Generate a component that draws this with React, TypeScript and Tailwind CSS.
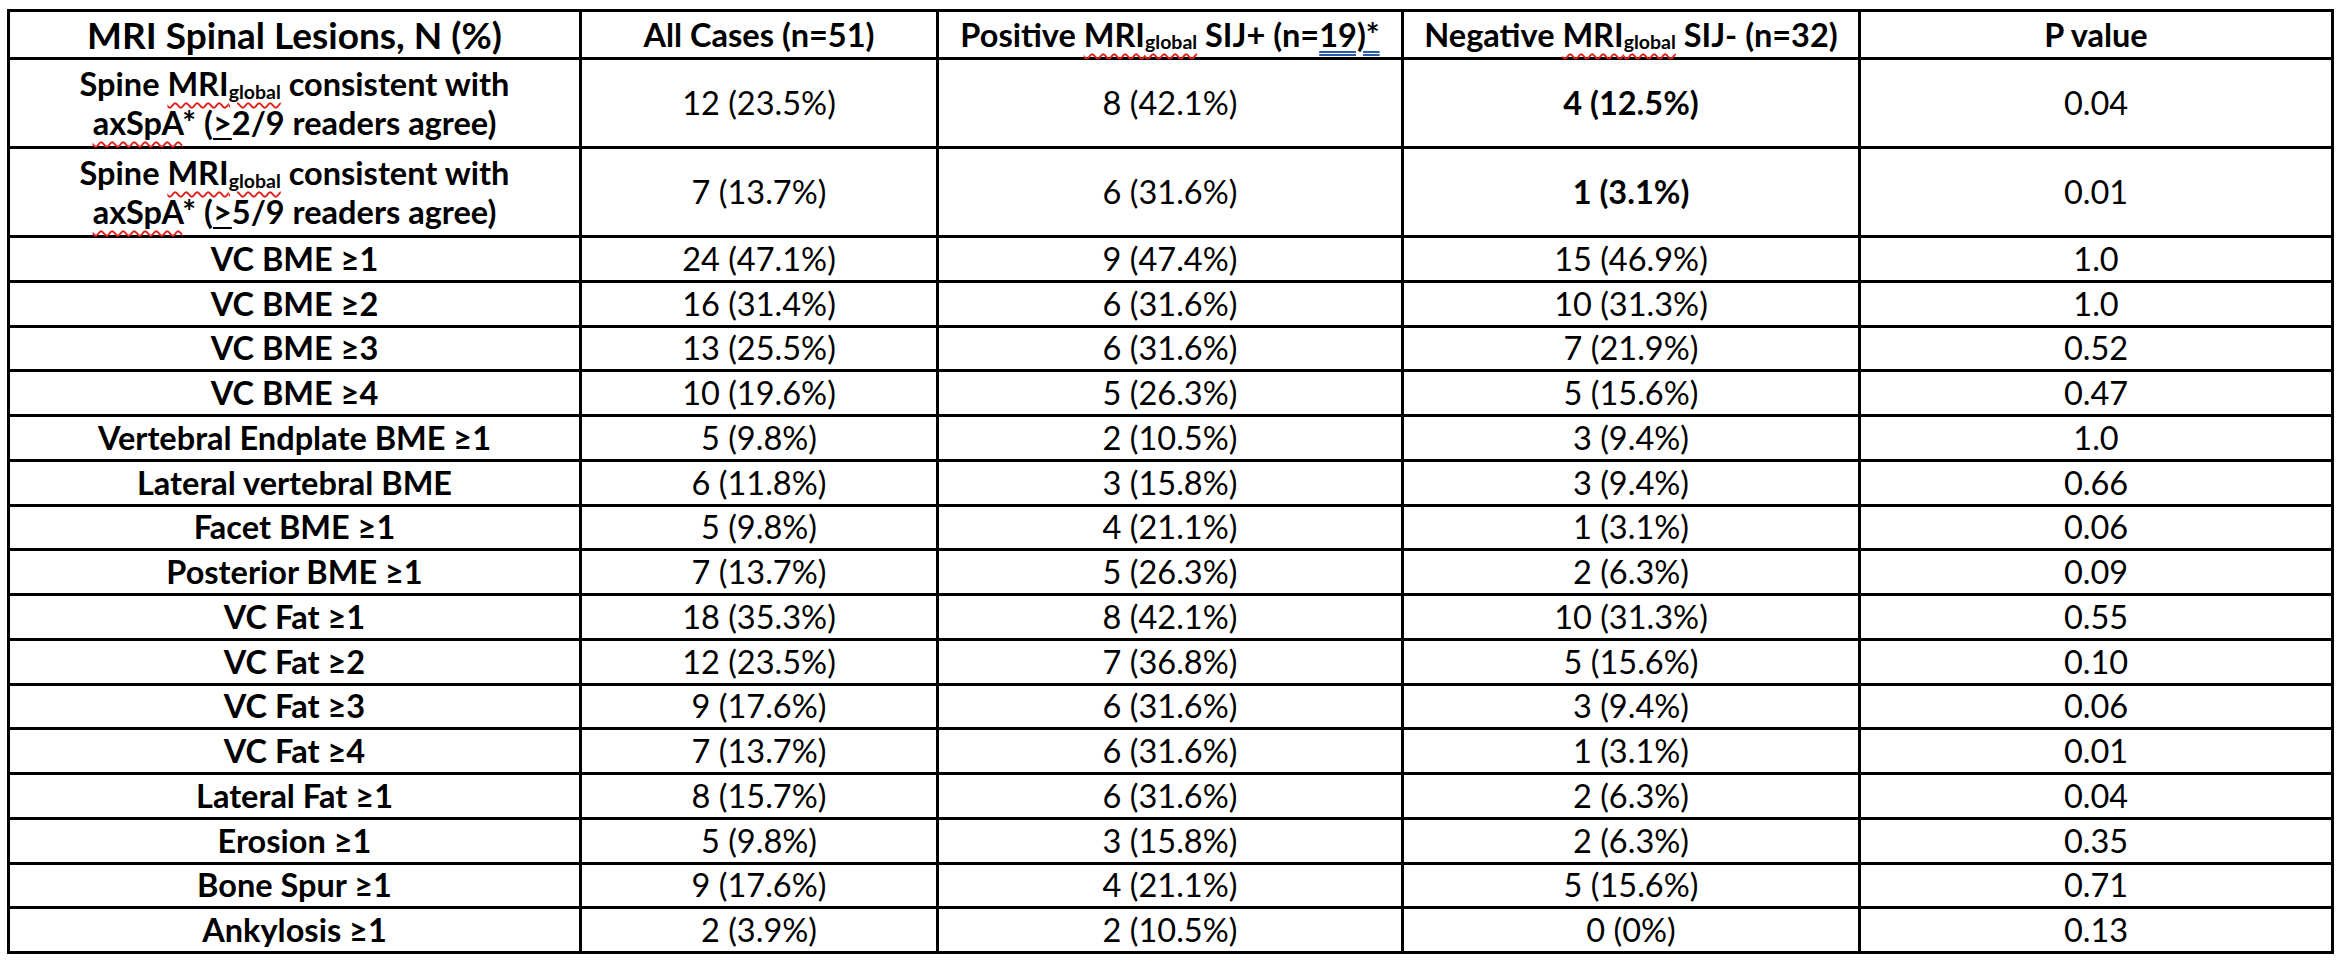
import React from "react";

type Row = [string, string, string, string, string];

const rows: Row[] = [
  ["VC BME ≥1", "24 (47.1%)", "9 (47.4%)", "15 (46.9%)", "1.0"],
  ["VC BME ≥2", "16 (31.4%)", "6 (31.6%)", "10 (31.3%)", "1.0"],
  ["VC BME ≥3", "13 (25.5%)", "6 (31.6%)", "7 (21.9%)", "0.52"],
  ["VC BME ≥4", "10 (19.6%)", "5 (26.3%)", "5 (15.6%)", "0.47"],
  ["Vertebral Endplate BME ≥1", "5 (9.8%)", "2 (10.5%)", "3 (9.4%)", "1.0"],
  ["Lateral vertebral BME", "6 (11.8%)", "3 (15.8%)", "3 (9.4%)", "0.66"],
  ["Facet BME ≥1", "5 (9.8%)", "4 (21.1%)", "1 (3.1%)", "0.06"],
  ["Posterior BME ≥1", "7 (13.7%)", "5 (26.3%)", "2 (6.3%)", "0.09"],
  ["VC Fat ≥1", "18 (35.3%)", "8 (42.1%)", "10 (31.3%)", "0.55"],
  ["VC Fat ≥2", "12 (23.5%)", "7 (36.8%)", "5 (15.6%)", "0.10"],
  ["VC Fat ≥3", "9 (17.6%)", "6 (31.6%)", "3 (9.4%)", "0.06"],
  ["VC Fat ≥4", "7 (13.7%)", "6 (31.6%)", "1 (3.1%)", "0.01"],
  ["Lateral Fat ≥1", "8 (15.7%)", "6 (31.6%)", "2 (6.3%)", "0.04"],
  ["Erosion ≥1", "5 (9.8%)", "3 (15.8%)", "2 (6.3%)", "0.35"],
  ["Bone Spur ≥1", "9 (17.6%)", "4 (21.1%)", "5 (15.6%)", "0.71"],
  ["Ankylosis ≥1", "2 (3.9%)", "2 (10.5%)", "0 (0%)", "0.13"],
];

const cell =
  "border-[3px] border-black text-center align-middle p-0 whitespace-nowrap leading-[34px]";

function MriGlobal() {
  return (
    <span className="underline decoration-wavy decoration-[#e0201b] decoration-[1.5px] underline-offset-[6px]">
      MRI
      <span className="text-[0.6em] relative top-[0.15em] leading-none">global</span>
    </span>
  );
}

function Wavy({ children }: { children: React.ReactNode }) {
  return (
    <span className="underline decoration-wavy decoration-[#e0201b] decoration-[1.5px] underline-offset-[6px]">
      {children}
    </span>
  );
}

function SpineLabel({ n }: { n: string }) {
  return (
    <div className="font-bold leading-[39px]">
      <div>
        Spine <MriGlobal /> consistent with
      </div>
      <div>
        <Wavy>axSpA</Wavy>* (<span className="underline decoration-[2px] underline-offset-[3px]">&gt;</span>
        {n}/9 readers agree)
      </div>
    </div>
  );
}

export default function App() {
  return (
    <div
      className="bg-white w-[2338px] h-[962px] overflow-hidden pt-[9px] pl-[7px] text-black text-[32.5px]"
      style={{ fontFamily: "Lato, 'Noto Sans', sans-serif" }}
    >
      <table className="table-fixed border-collapse w-[2324px]">
        <colgroup>
          <col className="w-[572px]" />
          <col className="w-[357px]" />
          <col className="w-[465px]" />
          <col className="w-[457px]" />
          <col className="w-[473px]" />
        </colgroup>
        <tbody>
          <tr className="h-[48px] font-bold">
            <td className={`${cell} text-[37px]`}>MRI Spinal Lesions, N (%)</td>
            <td className={cell}>All Cases (n=51)</td>
            <td className={cell}>
              Positive <MriGlobal /> SIJ+ (n=
              <span className="underline decoration-double decoration-[#2b5aa8] decoration-[2px] underline-offset-[4px]">19)*</span>
            </td>
            <td className={cell}>
              Negative <MriGlobal /> SIJ- (n=32)
            </td>
            <td className={cell}>P value</td>
          </tr>
          <tr className="h-[89px]">
            <td className={cell}>
              <SpineLabel n="2" />
            </td>
            <td className={cell}>12 (23.5%)</td>
            <td className={cell}>8 (42.1%)</td>
            <td className={`${cell} font-bold`}>4 (12.5%)</td>
            <td className={cell}>0.04</td>
          </tr>
          <tr className="h-[89px]">
            <td className={cell}>
              <SpineLabel n="5" />
            </td>
            <td className={cell}>7 (13.7%)</td>
            <td className={cell}>6 (31.6%)</td>
            <td className={`${cell} font-bold`}>1 (3.1%)</td>
            <td className={cell}>0.01</td>
          </tr>
          {rows.map((r, i) => (
            <tr key={i} className="h-[44.75px]">
              <td className={`${cell} font-bold`}>{r[0]}</td>
              <td className={cell}>{r[1]}</td>
              <td className={cell}>{r[2]}</td>
              <td className={cell}>{r[3]}</td>
              <td className={cell}>{r[4]}</td>
            </tr>
          ))}
        </tbody>
      </table>
    </div>
  );
}
